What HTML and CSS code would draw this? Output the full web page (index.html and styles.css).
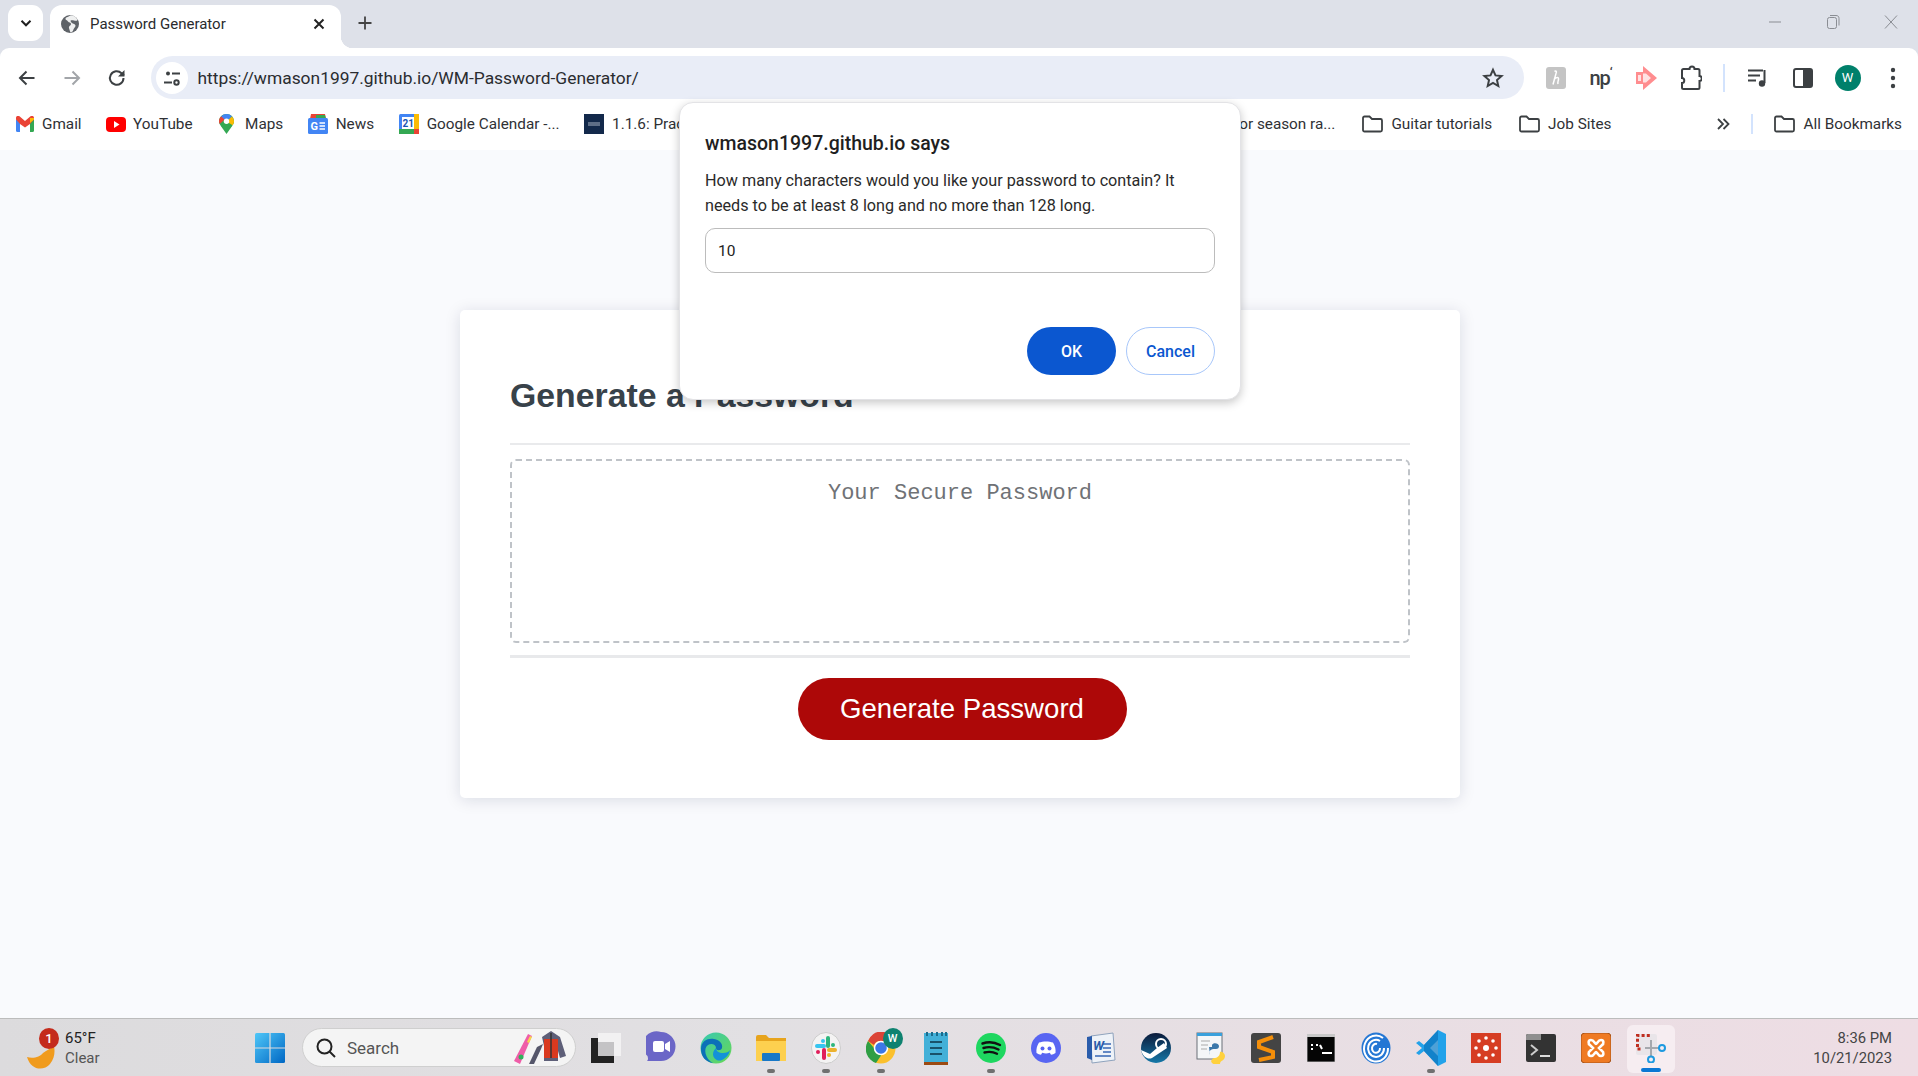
FILE: index.html
```html
<!DOCTYPE html>
<html lang="en">
<head>
<meta charset="utf-8">
<title>Password Generator</title>
<link rel="stylesheet" href="styles.css">
</head>
<body>
<div class="screen">
  <header class="tabstrip">
    <div class="tabsearch"><svg width="14" height="14" viewBox="0 0 14 14"><path d="M2.500 4.800 7 9.300l4.500-4.500" fill="none" stroke="#1f1f1f" stroke-width="2"/></svg></div>
    <div class="tab">
      <svg class="favicon" width="20" height="20" viewBox="0 0 20 20"><circle cx="10" cy="10" r="9" fill="#5f6368"/><path d="M10 1.500c-1 1.500-4 1.200-4.500 3-.4 1.600 1.500 1.500 2.500 3 .8 1.200 3 .8 3 2.500 0 1.500-2.500 2-2 4 .3 1.300.8 2.500 1.500 4.500l2-1c1-1.500 1-3 2.500-4.500 1-1 .5-2.500-1-3-1.500-.5-3-1.500-3.500-3-.3-1 2-1 3.500-.5 1.500.5 3 .5 3.500-.5-1-2.500-3-4.500-7.500-4.500z" fill="#fff" opacity=".9"/></svg>
      <span class="tabtitle">Password Generator</span>
      <svg class="tabclose" width="14" height="14" viewBox="0 0 14 14"><path d="M2.500 2.500l9 9m0-9l-9 9" stroke="#222" stroke-width="2"/></svg>
    </div>
    <svg class="newtab" width="16" height="16" viewBox="0 0 16 16"><path d="M8 1.500v13M1.500 8h13" stroke="#444" stroke-width="1.800"/></svg>
    <div class="wincontrols">
      <span class="winbtn"><svg width="14" height="14" viewBox="0 0 14 14"><path d="M1 7h12" stroke="#8a8d93" stroke-width="1"/></svg></span>
      <span class="winbtn winbtn-mid"><svg width="14" height="16" viewBox="0 0 14 16"><rect x="1.500" y="3.500" width="9" height="11" rx="2" fill="none" stroke="#8a8d93"/><path d="M4 1.500h6c2 0 3 1 3 3v7" fill="none" stroke="#8a8d93"/></svg></span>
      <span class="winbtn winbtn-last"><svg width="14" height="16" viewBox="0 0 14 16"><path d="M1 1.500l12 13m0-13l-12 13" stroke="#8a8d93" stroke-width="1"/></svg></span>
    </div>
  </header>

  <div class="toolbar">
    <span class="slot"><svg width="20" height="20" viewBox="0 0 20 20"><path d="M17.500 10H3.500M9.500 3.500 3 10l6.500 6.500" fill="none" stroke="#3c4043" stroke-width="2"/></svg></span>
    <span class="slot"><svg width="20" height="20" viewBox="0 0 20 20"><path d="M2.500 10h14M10.500 3.500 17 10l-6.500 6.500" fill="none" stroke="#a2a5a9" stroke-width="2"/></svg></span>
    <span class="slot"><svg width="20" height="20" viewBox="0 0 20 20"><path d="M16.500 10a6.800 6.800 0 1 1-2-4.800L17 7.500" fill="none" stroke="#3c4043" stroke-width="2"/><path d="M17.500 2v6.500H11z" fill="#3c4043"/></svg></span>
    <div class="omnibox">
      <span class="siteinfo"><svg width="20" height="20" viewBox="0 0 20 20"><g fill="none" stroke="#3c4043" stroke-width="2"><circle cx="6" cy="5.500" r="2" fill="#3c4043" stroke="none"/><path d="M10 5.500h8M2 14.500h8"/><circle cx="14.500" cy="14.500" r="2.200"/></g></svg></span>
      <span class="url">https://wmason1997.github.io/WM-Password-Generator/</span>
      <svg class="star" width="22" height="22" viewBox="0 0 22 22"><path d="M11 2.800l2.500 5.600 6.100.6-4.600 4.100 1.300 6-5.300-3.100-5.300 3.100 1.300-6L2.400 9l6.100-.6z" fill="none" stroke="#3c4043" stroke-width="2"/></svg>
    </div>
    <span class="slot"><svg width="22" height="22" viewBox="0 0 22 22"><rect x="1" y="0" width="20" height="22" rx="3" fill="#c4c4c4"/><path d="M9.500 4.500c1.500-1.500 2.500 0 1.500 2L8 17.500M9 12.500c2-2.500 5-3 4.500 0-.3 1.500-1 2.500-.5 4.500" fill="none" stroke="#fff" stroke-width="1.500"/></svg></span>
    <span class="slot"><span class="npmark">np<sup>‘</sup></span></span>
    <span class="slot"><svg width="22" height="26" viewBox="0 0 22 26"><path d="M8 1l14 12L8 25v-6H1V7h7z" fill="#ff8d8f"/><path d="M8 8.500v9h3l5-4.500-5-4.500zM3 10h3v6H3z" fill="#fff" opacity=".75"/></svg></span>
    <span class="slot"><svg width="22" height="26" viewBox="0 0 22 26"><path d="M7 4h2.500c0-3.500 5-3.500 5 0H18a1.500 1.500 0 0 1 1.500 1.500V11c3 0 3 5 0 5v6.500A1.500 1.500 0 0 1 18 24H3.500A1.500 1.500 0 0 1 2 22.500V18c3 0 3-5 0-5V5.500A1.500 1.500 0 0 1 3.500 4z" fill="none" stroke="#3c4043" stroke-width="2"/></svg></span>
    <span class="tooldiv"></span>
    <span class="slot"><svg width="22" height="22" viewBox="0 0 22 22"><path d="M1 3.500h15M1 8.500h12M1 13.500h8M17.500 3v13" fill="none" stroke="#3c4043" stroke-width="2"/><circle cx="15" cy="16.500" r="3.200" fill="#3c4043"/></svg></span>
    <span class="slot"><svg width="20" height="22" viewBox="0 0 20 22"><rect x="1" y="2" width="18" height="18" rx="2" fill="none" stroke="#3c4043" stroke-width="2"/><rect x="10" y="2" width="9" height="18" fill="#3c4043"/></svg></span>
    <span class="slot"><span class="avatar">W</span></span>
    <span class="slot"><svg width="6" height="24" viewBox="0 0 6 24"><circle cx="3" cy="4" r="2.200" fill="#3c4043"/><circle cx="3" cy="12" r="2.200" fill="#3c4043"/><circle cx="3" cy="20" r="2.200" fill="#3c4043"/></svg></span>
  </div>

  <nav class="bookmarks">
    <a class="bm"><svg width="18" height="16" viewBox="0 0 18 16"><path d="M0 3v11.500A1.500 1.500 0 0 0 1.500 16H4V7z" fill="#4285f4"/><path d="M18 3v11.500a1.500 1.500 0 0 1-1.500 1.500H14V7z" fill="#34a853"/><path d="M4 8 0 3.500V2c0-2 2.200-2.800 3.500-1.700L9 5l5.500-4.700C15.800-.8 18 0 18 2v1.500L14 8 9 11.500z" fill="#ea4335"/><path d="M14 2 18 2v1.500L14 7z" fill="#fbbc04"/></svg><span>Gmail</span></a>
    <a class="bm bm-yt"><svg width="20" height="15" viewBox="0 0 20 15"><rect width="20" height="15" rx="4" fill="#f00"/><path d="M8 4l5.500 3.500L8 11z" fill="#fff"/></svg><span>YouTube</span></a>
    <a class="bm bm-maps"><svg width="15" height="20" viewBox="0 0 15 20"><path d="M7.500 0C3.300 0 0 3.200 0 7.300c0 2 1 3.500 2 5l5.500 7.700 5.500-7.700c1-1.500 2-3 2-5C15 3.200 11.700 0 7.500 0z" fill="#34a853"/><path d="M2.200 2.200A7.400 7.400 0 0 0 0 7.300c0 1 .3 2 .8 2.800L7.500 3.800z" fill="#ea4335"/><path d="M7.500 0A7.500 7.500 0 0 1 13 2.400L7.500 7.500 2.200 2.200A7.500 7.500 0 0 1 7.500 0z" fill="#4285f4"/><path d="M13 2.400A7.300 7.300 0 0 1 15 7.300c0 1.500-.6 2.700-1.300 4L7.500 7.500z" fill="#fbbc04"/><circle cx="7.500" cy="7.300" r="2.700" fill="#fff"/></svg><span>Maps</span></a>
    <a class="bm"><svg width="20" height="20" viewBox="0 0 20 20"><path d="M3 0h14l1 5H2z" fill="#ea4335"/><path d="M8 1h9l1 4H8z" fill="#34a853"/><rect y="4" width="20" height="16" rx="1.500" fill="#4285f4"/><path d="M11.500 9H17M11.500 12H17M11.500 15H17" stroke="#fff" stroke-width="1.500"/><text x="2.500" y="16" class="svgtext news">G</text></svg><span>News</span></a>
    <a class="bm"><svg width="20" height="20" viewBox="0 0 20 20"><rect width="20" height="20" rx="1.500" fill="#4285f4"/><rect x="15" width="5" height="15" fill="#fbbc04"/><rect y="15" width="15" height="5" fill="#34a853"/><rect x="15" y="15" width="5" height="5" fill="#ea4335"/><rect x="3" y="3" width="12" height="12" fill="#fff"/><text x="3.500" y="13" class="svgtext cal">21</text></svg><span>Google Calendar -...</span></a>
    <a class="bm"><svg width="20" height="20" viewBox="0 0 20 20"><rect width="20" height="20" fill="#13294b"/><path d="M4 9h12M4 11h12" stroke="#aab4c4"/></svg><span>1.1.6: Practice</span></a>
    <a class="bm bm-push"><span>Minor season ra...</span></a>
    <a class="bm bm-folder"><svg width="21" height="18" viewBox="0 0 21 18"><path d="M2.500 1.500h5l2.500 2.500h8.500a1.500 1.500 0 0 1 1.500 1.500v9.500a1.500 1.500 0 0 1-1.500 1.500h-16A1.500 1.500 0 0 1 1 15V3a1.500 1.500 0 0 1 1.500-1.500z" fill="none" stroke="#3c4043" stroke-width="1.800"/></svg><span>Guitar tutorials</span></a>
    <a class="bm bm-folder"><svg width="21" height="18" viewBox="0 0 21 18"><path d="M2.500 1.500h5l2.500 2.500h8.500a1.500 1.500 0 0 1 1.500 1.500v9.500a1.500 1.500 0 0 1-1.500 1.500h-16A1.500 1.500 0 0 1 1 15V3a1.500 1.500 0 0 1 1.500-1.500z" fill="none" stroke="#3c4043" stroke-width="1.800"/></svg><span>Job Sites</span></a>
    <svg class="more" width="14" height="14" viewBox="0 0 14 14"><path d="M2 2l5 5-5 5M7.500 2l5 5-5 5" fill="none" stroke="#3c4043" stroke-width="1.800"/></svg>
    <span class="bmdiv"></span>
    <a class="bm"><svg width="21" height="18" viewBox="0 0 21 18"><path d="M2.500 1.500h5l2.500 2.500h8.500a1.500 1.500 0 0 1 1.500 1.500v9.500a1.500 1.500 0 0 1-1.500 1.500h-16A1.500 1.500 0 0 1 1 15V3a1.500 1.500 0 0 1 1.500-1.500z" fill="none" stroke="#3c4043" stroke-width="1.800"/></svg><span>All Bookmarks</span></a>
  </nav>

  <main class="page">
    <section class="card">
      <div class="cardhead"><h2>Generate a Password</h2></div>
      <div class="cardbody"><div class="pwbox">Your Secure Password</div></div>
      <div class="cardfoot"><button class="genbtn">Generate Password</button></div>
    </section>
  </main>

  <footer class="taskbar">
    <div class="weather">
      <svg class="moon" width="28" height="24" viewBox="0 0 28 24"><path d="M0 11c6 2 13 0 16-4 3-2 8-5 11-7 1 5 1 12-4 18-6 7-19 7-23-7z" fill="#f09b1d"/></svg>
      <span class="wbadge">1</span>
      <div class="wtext"><span>65°F</span><span class="wsub">Clear</span></div>
    </div>
    <svg class="start" width="30" height="30" viewBox="0 0 30 30"><defs><linearGradient id="wg" x1="0" y1="0" x2="1" y2="1"><stop offset="0" stop-color="#4fc7f8"/><stop offset="1" stop-color="#0067c4"/></linearGradient></defs><rect width="30" height="30" fill="url(#wg)" rx="1.500"/><path d="M15 0v30M0 15h30" stroke="#dedcde" stroke-width="1.200"/></svg>
    <div class="searchpill">
      <svg width="22" height="22" viewBox="0 0 22 22"><circle cx="9.500" cy="9.500" r="7" fill="none" stroke="#222" stroke-width="2"/><path d="M14.500 14.500 20 20" stroke="#222" stroke-width="2"/></svg>
      <span class="searchlabel">Search</span>
      <svg class="searchart" width="54" height="34" viewBox="0 0 54 34"><path d="M1 30 15 3l4 2L7 33z" fill="#ef5da8"/><circle cx="8" cy="26" r="2.500" fill="#2fb25a"/><path d="M14 11l3-6 2 1-3 6z" fill="#f6d64c"/><path d="M16 33l8-17 6-3-2 5-7 15z" fill="#55566a"/><path d="M29 6l9-6 9 6 6 19-6 2-2-7v10H31V15z" fill="#5e5f78"/><path d="M31 8h14v19H31z" fill="#d9391f"/><path d="M38 2v25" stroke="#333" stroke-width="1.500"/></svg>
    </div>
    <div class="taskicons">
      <span class="ti"><svg width="30" height="30" viewBox="0 0 30 30"><rect x="0" y="5" width="23" height="25" fill="#222"/><rect x="7" y="0" width="23" height="23" fill="#f2f1f2"/><rect x="7" y="9" width="16" height="14" fill="#c4c3c5"/></svg></span>
      <span class="ti"><svg width="30" height="34" viewBox="0 0 30 34"><path d="M15 1a14 14 0 0 1 0 29H1c1.500-1.500 1-3 .5-5A14 14 0 0 1 15 1z" fill="#6b66c7"/><rect x="7" y="10" width="11" height="11" rx="2" fill="#fff"/><path d="M19 13l5-3v11l-5-3z" fill="#fff"/></svg></span>
      <span class="ti"><svg width="32" height="32" viewBox="0 0 32 32"><defs><linearGradient id="eg" x1="0" y1="0" x2="1" y2="1"><stop offset="0" stop-color="#37c9b3"/><stop offset="1" stop-color="#69d852"/></linearGradient></defs><circle cx="16" cy="16" r="15.500" fill="url(#eg)"/><path d="M1 17C1 8 9 6 14 7c6 1 9 5 8 9-1 3-6 3-6 0 0-4-5-5-8-3C3 16 5 27 13 31 6 30 1 25 1 17z" fill="#0c70b8"/><path d="M22 28c-5 2-9-2-9-6 0-3 2-5 3-6 0 3 3 5 7 5 3 0 6-1 7-3-1 5-4 8-8 10z" fill="#1392d8"/></svg></span>
      <span class="ti ti-on"><svg width="30" height="26" viewBox="0 0 30 26"><path d="M0 2a2 2 0 0 1 2-2h8l3 3h17v23H0z" fill="#e7a41d"/><rect y="6" width="30" height="20" fill="#fdd04f"/><rect x="6" y="18" width="18" height="8" rx="1" fill="#1878c8"/></svg></span>
      <span class="ti ti-on"><svg width="30" height="32" viewBox="0 0 30 32"><ellipse cx="15" cy="16" rx="14.500" ry="15.500" fill="#f4f3f3" stroke="#ccc"/><g stroke-width="4" stroke-linecap="round" fill="none"><path d="M17 6v8" stroke="#2eb67d"/><path d="M12 9v0" stroke="#36c5f0"/><path d="M13 18v8" stroke="#e01e5a"/><path d="M6 14h7" stroke="#36c5f0"/><path d="M7 20v0" stroke="#e01e5a"/><path d="M18 18h6" stroke="#ecb22e"/><path d="M22 13v0" stroke="#2eb67d"/><path d="M18 23v0" stroke="#ecb22e"/></g></svg></span>
      <span class="ti ti-on"><svg width="30" height="32" viewBox="0 0 30 32"><ellipse cx="15" cy="16" rx="14.500" ry="15.500" fill="#fbc02d"/><path d="M2 9A14 15 0 0 1 28 9H15a7 7 0 0 0-7 4z" fill="#db4437"/><path d="M2 9a15 15 0 0 0 8 22l6-9c-4 1-7-2-8-6z" fill="#2f9e44"/><circle cx="15" cy="16" r="6.500" fill="#3b78e7" stroke="#fff" stroke-width="1.500"/></svg><span class="chromebadge">W</span></span>
      <span class="ti"><svg width="24" height="34" viewBox="0 0 24 34"><rect y="2" width="24" height="30" fill="#42b0d8"/><rect y="31" width="24" height="3" fill="#9c4a12"/><path d="M6 11h12M6 17h12M6 23h12" stroke="#19526b" stroke-width="1.800"/><path d="M3 1v4M8 1v4M13 1v4M18 1v4M22 1v4" stroke="#1b6b8c" stroke-width="2"/></svg></span>
      <span class="ti ti-on"><svg width="30" height="30" viewBox="0 0 30 30"><circle cx="15" cy="15" r="15" fill="#1ed760"/><path d="M6.500 10.500c6-2 12-1.500 17.500 1.500M7.500 15c5-1.500 10-1 15 1.500M8.500 19.500c4-1 8.500-.8 12.500 1.200" fill="none" stroke="#111" stroke-width="2.400" stroke-linecap="round"/></svg></span>
      <span class="ti"><svg width="30" height="30" viewBox="0 0 30 30"><circle cx="15" cy="15" r="15" fill="#5865f2"/><path d="M8 9.500c4-1.500 10-1.500 14 0 2 3 3 7 2.500 10.500-1.500 1-3 1.500-4.500 1.800l-1.200-2a13 13 0 0 1-7.600 0l-1.200 2c-1.500-.3-3-.8-4.500-1.800C5 16.500 6 12.500 8 9.500z" fill="#fff"/><circle cx="11.500" cy="15.500" r="2" fill="#5865f2"/><circle cx="18.500" cy="15.500" r="2" fill="#5865f2"/></svg></span>
      <span class="ti"><svg width="30" height="32" viewBox="0 0 30 32"><path d="M5 4 27 1l2 27-23 3z" fill="#eef2f8" stroke="#8fa3bd"/><path d="M1 5l5-1v24l-5-2z" fill="#2a5cab"/><path d="M17 12h8M17 16h8M17 20h8M9 24h16" stroke="#3767b4" stroke-width="1.600"/><text x="7" y="18" class="svgtext word">W</text></svg></span>
      <span class="ti"><svg width="30" height="30" viewBox="0 0 30 30"><defs><linearGradient id="sg" x1="0" y1="0" x2="0" y2="1"><stop offset="0" stop-color="#0b1a3a"/><stop offset="1" stop-color="#1578a8"/></linearGradient></defs><circle cx="15" cy="15" r="15" fill="url(#sg)"/><path d="M0 17l9 4 7-6 7-5 3 5-9 6-6 4c-4 2-9-1-11-8z" fill="#fff"/><circle cx="20" cy="11" r="5" fill="none" stroke="#fff" stroke-width="2"/></svg></span>
      <span class="ti"><svg width="30" height="32" viewBox="0 0 30 32"><rect x="1" y="1" width="25" height="26" fill="#f4f6f8" stroke="#6b7178"/><rect x="1" y="1" width="25" height="3" fill="#39a0dc"/><path d="M5 9h9M5 13h7M5 17h6" stroke="#aaa"/><path d="M14 23c-2-6 3-6 6-6 2 0 3-1 3-3 0-3-6-4-7-1v2h-3z" fill="#3c78aa"/><path d="M16 31c-2-2 0-4 2-5 3 0 6-2 6-6 0-1 5 0 5 4 0 5-5 4-5 8-2 1-6 1-8-1z" fill="#ffd13d"/></svg></span>
      <span class="ti"><span class="sublime"><svg width="20" height="28" viewBox="0 0 20 28"><path d="M17 3 3 8v5l14 5v5L3 26" fill="none" stroke="#f58f0a" stroke-width="4"/></svg></span></span>
      <span class="ti"><svg width="28" height="28" viewBox="0 0 28 28"><rect width="28" height="28" fill="#050505" stroke="#a8a8a8"/><rect width="28" height="3" fill="#c8c8c8"/><path d="M15 19h10" stroke="#fff" stroke-width="2"/><path d="M4 11h2M4 15h2M9 11h2M13 11l2 4" stroke="#fff" stroke-width="2"/></svg></span>
      <span class="ti"><svg width="30" height="32" viewBox="0 0 30 32"><ellipse cx="15" cy="16" rx="14.500" ry="15.500" fill="#2477d4"/><g fill="none" stroke="#fff" stroke-width="2"><path d="M27 16a12 13 0 1 1-5-10"/><path d="M23 16a8 8.500 0 1 1-4-7"/><path d="M19 16a4 4.500 0 1 1-3-4"/></g></svg></span>
      <span class="ti ti-on"><svg width="30" height="36" viewBox="0 0 30 36"><path d="M22 0 30 4v28l-8 4L8 21l-5 4-3-2 6-5-6-5 3-2 5 4z" fill="#22a2ea"/><path d="M22 0v36L8 21l0-6z" fill="#0f7ac2" opacity=".8"/><path d="M22 10v16l-8-8z" fill="#fff" opacity=".25"/></svg></span>
      <span class="ti"><svg width="30" height="30" viewBox="0 0 30 30"><rect width="30" height="30" fill="#d63d23"/><g fill="#fff"><circle cx="15" cy="15" r="3"/><circle cx="15" cy="5" r="1.800"/><circle cx="15" cy="25" r="1.800"/><circle cx="5" cy="15" r="1.800"/><circle cx="25" cy="15" r="1.800"/><circle cx="8" cy="8" r="1.800"/><circle cx="22" cy="8" r="1.800"/><circle cx="8" cy="22" r="1.800"/><circle cx="22" cy="22" r="1.800"/></g></svg></span>
      <span class="ti"><svg width="30" height="28" viewBox="0 0 30 28"><rect width="30" height="28" rx="2" fill="#333"/><path d="M0 2a2 2 0 0 1 2-2h13v6H0z" fill="#8f8f8f"/><path d="M5 11l6 5-6 5" fill="none" stroke="#ccc" stroke-width="2"/><path d="M14 22h10" stroke="#ddd" stroke-width="2"/></svg></span>
      <span class="ti"><svg width="30" height="30" viewBox="0 0 30 30"><rect width="30" height="30" rx="4" fill="#ef7a23" stroke="#a9551a"/><path d="M10 7c-3 0-3 4-1 5l3 3-3 3c-2 1-2 5 1 5 3 0 4-4 5-4s2 4 5 4c3 0 3-4 1-5l-3-3 3-3c2-1 2-5-1-5-3 0-4 4-5 4s-2-4-5-4z" fill="none" stroke="#fff" stroke-width="2.600"/></svg></span>
      <span class="ti ti-active"><svg width="30" height="30" viewBox="0 0 30 30"><rect x="0" y="1" width="21" height="21" rx="2" fill="#e9e5e9"/><path d="M1.500 14V2.500H14.500" stroke="#bf2e20" stroke-width="3" stroke-dasharray="3 2.200" fill="none"/><path d="M1.500 16H6" stroke="#bf2e20" stroke-width="3" stroke-dasharray="3 2.200" fill="none"/><path d="M15 7v18M9 15h14" stroke="#a5a8ad" stroke-width="2"/><circle cx="26" cy="15" r="3" fill="#f6edf1" stroke="#1d9ae0" stroke-width="2"/><circle cx="15" cy="26.500" r="3" fill="#f6edf1" stroke="#1d9ae0" stroke-width="2"/></svg></span>
    </div>
    <div class="clock"><span>8:36 PM</span><span>10/21/2023</span></div>
  </footer>

  <div class="dialog" role="dialog">
    <div class="dlgtitle">wmason1997.github.io says</div>
    <p class="dlgmsg">How many characters would you like your password to contain? It needs to be at least 8 long and no more than 128 long.</p>
    <div class="dlginput">10</div>
    <div class="dlgbtns"><button class="btn-ok">OK</button><button class="btn-cancel">Cancel</button></div>
  </div>
</div>
</body>
</html>
```
FILE: styles.css
```css
* { box-sizing: border-box; }
html, body { margin: 0; padding: 0; }
body { font-family: "Roboto", "Liberation Sans", sans-serif; color: #222; overflow: hidden; }
.screen { position: relative; width: 1918px; height: 1076px; display: flex; flex-direction: column; overflow: hidden; background: #dee1e9; }
svg { display: block; flex: none; }

.tabstrip { height: 48px; flex: none; display: flex; align-items: flex-start; padding: 5px 0 0 8px; }
.tabsearch { width: 35px; height: 36px; background: #fff; border-radius: 11px; display: flex; align-items: center; justify-content: center; }
.tab { position: relative; margin-left: 7px; width: 291px; height: 43px; background: #fff; border-radius: 12px 12px 0 0; display: flex; align-items: center; padding: 0 15px 6px 10px; }
.tab::after { content: ""; position: absolute; right: -12px; bottom: 0; width: 12px; height: 12px; background: radial-gradient(circle at 100% 0, transparent 12px, #fff 12.500px); }
.favicon { margin-right: 10px; }
.tabtitle { flex: 1; font-size: 15px; color: #2a2b2e; white-space: nowrap; }
.newtab { margin: 10px 0 0 16px; }
.wincontrols { margin-left: auto; display: flex; }
.winbtn { width: 55px; height: 34px; display: flex; align-items: center; justify-content: center; }
.winbtn-mid { width: 62px; }
.winbtn-last { width: 54px; }

.toolbar { height: 52px; flex: none; background: #fff; border-radius: 9px 9px 0 0; display: flex; align-items: center; padding: 0 3px 0 4.500px; }
.slot { width: 45px; height: 40px; flex: none; display: flex; align-items: center; justify-content: center; margin-top: 7px; }
.omnibox { flex: 1; height: 43px; margin: 8px 9px 0 11px; align-self: flex-start; padding: 0 20px 0 5px; background: #e9edf7; border-radius: 22px; display: flex; align-items: center; }
.siteinfo { width: 32px; height: 32px; border-radius: 50%; background: #fff; display: flex; align-items: center; justify-content: center; margin-right: 10px; }
.url { flex: 1; font-size: 17.400px; color: #2a2c30; white-space: nowrap; }
.npmark { font: 500 20px/1 "Roboto", sans-serif; color: #3c4043; letter-spacing: -1px; }
.npmark sup { font-size: 13px; line-height: 0; }
.tooldiv { width: 22px; height: 28px; margin-top: 7px; display: flex; justify-content: center; flex: none; }
.tooldiv::before { content: ""; width: 2px; height: 28px; background: #d3e3fd; }
.avatar { width: 26px; height: 26px; border-radius: 50%; background: #00806b; color: #fff; font-size: 13px; display: flex; align-items: center; justify-content: center; }

.bookmarks { height: 50px; flex: none; background: #fff; display: flex; align-items: center; padding: 0 16px 2px 16px; gap: 24.500px; }
.bm { display: flex; align-items: center; gap: 8px; font-size: 15.300px; color: #2f3135; white-space: nowrap; }
.bm-yt { gap: 7px; }
.bm-maps svg { margin: 0 3px 0 2px; }
.bm-push { margin-left: auto; }
.bm-folder { margin-left: 2.500px; }
.more { margin-left: 80.500px; }
.bmdiv { width: 2px; height: 20px; background: #d3e3fd; margin: 0 -3.500px; }
.svgtext { font-family: "Roboto", sans-serif; font-weight: 700; }
.svgtext.news { font-size: 11px; fill: #fff; }
.svgtext.cal { font-size: 10px; fill: #1a56b0; }
.svgtext.word { font-size: 13px; fill: #2a5cab; font-style: italic; }

.page { flex: 1; background: #f9fafd; display: flex; justify-content: center; padding: 160px 0 0 2px; }
.card { width: 1000px; height: 488px; background: #fff; border-radius: 5px; box-shadow: 0 2px 16px rgba(0, 20, 60, .13); padding: 0 50px; display: flex; flex-direction: column; }
.cardhead { height: 135px; border-bottom: 2px solid #e9eaec; display: flex; align-items: center; padding-top: 37px; }
h2 { margin: 0; font: 700 33.800px/1.2 "Liberation Sans", sans-serif; color: #38424a; }
.cardbody { padding: 14px 0 12px; border-bottom: 3px solid #e8e9eb; }
.pwbox { height: 184px; border: 2px dashed #bfc3c8; border-radius: 6px; padding: 20px 0; text-align: center; font: 22px/1.200 "Liberation Mono", monospace; color: #6f7276; }
.cardfoot { flex: 1; display: flex; justify-content: center; align-items: flex-start; padding-top: 20px; padding-left: 4px; }
.genbtn { width: 329px; height: 62px; border: 0; border-radius: 31px; background: #ad0808; color: #fff; font: 27.600px "Liberation Sans", sans-serif; }

.taskbar { height: 58px; flex: none; display: flex; align-items: center; border-top: 1px solid #bcbcbc; background: linear-gradient(90deg, #dcdbdd 0%, #e2e0e3 40%, #eedde4 100%); }
.weather { position: relative; width: 255px; flex: none; height: 56px; display: flex; align-items: center; padding-left: 65px; }
.moon { position: absolute; left: 27px; top: 26px; }
.wbadge { position: absolute; left: 39px; top: 8px; width: 20px; height: 21px; border-radius: 50%; background: #c42b1c; color: #fff; font-size: 13px; font-weight: 500; display: flex; align-items: center; justify-content: center; }
.wtext { display: flex; flex-direction: column; font-size: 15px; line-height: 20px; color: #222; }
.wsub { color: #555; }
.start { flex: none; }
.searchpill { margin-left: 17px; width: 274px; height: 39px; flex: none; border-radius: 20px; border: 1px solid #cfcfcf; background: #f4f4f4; display: flex; align-items: center; padding-left: 12px; }
.searchlabel { margin-left: 10px; font-size: 17px; color: #555; }
.searchart { margin-left: auto; margin-right: 8px; }
.taskicons { margin-left: 2.500px; display: flex; flex: none; }
.ti { position: relative; width: 55px; height: 56px; display: flex; align-items: center; justify-content: center; padding-top: 1px; }
.ti-on::after { content: ""; position: absolute; left: 23.500px; bottom: 3px; width: 8px; height: 4px; border-radius: 2px; background: #707070; }
.ti-active { background: #f6edf1; border-radius: 6px; height: 48px; width: 48px; margin: 5px 0 0 3.500px; padding: 0 0 2px; }
.ti-active::after { content: ""; position: absolute; left: 14px; bottom: 1px; width: 20px; height: 4px; border-radius: 2px; background: #0a78d4; }
.chromebadge { position: absolute; left: 29px; top: 8px; width: 20px; height: 21px; border-radius: 50%; background: #0f8270; color: #fff; font-size: 11px; font-weight: 500; display: flex; align-items: center; justify-content: center; }
.sublime { width: 30px; height: 30px; border-radius: 3px; background: #444; display: flex; align-items: center; justify-content: center; }
.clock { margin-left: auto; margin-right: 26px; display: flex; flex-direction: column; align-items: flex-end; font-size: 14.800px; line-height: 20px; color: #444; }

.dialog { position: absolute; left: 679px; top: 102px; width: 562px; height: 298px; background: #fff; border-radius: 14px; border: 1px solid #e3e3e6; box-shadow: 0 3px 10px rgba(0, 0, 0, .22); padding: 0 25px; display: flex; flex-direction: column; }
.dlgtitle { margin-top: 29px; font-size: 19.500px; font-weight: 500; line-height: 24px; color: #1f1f1f; }
.dlgmsg { margin: 12px 0 0; font-size: 16.200px; line-height: 25px; color: #2a2a2a; }
.dlginput { margin-top: 10px; height: 45px; border: 1px solid #bcbcbc; border-radius: 10px; padding: 0 12px; display: flex; align-items: center; font-size: 15.500px; color: #222; }
.dlgbtns { margin-top: auto; margin-bottom: 24px; display: flex; justify-content: flex-end; gap: 10px; }
.dlgbtns button { width: 89px; height: 48px; border-radius: 24px; font: 500 16px "Roboto", sans-serif; }
.btn-ok { background: #0b57d0; color: #fff; border: 0; }
.btn-cancel { background: #fff; color: #0b57d0; border: 1px solid #a8c7fa; }
```
